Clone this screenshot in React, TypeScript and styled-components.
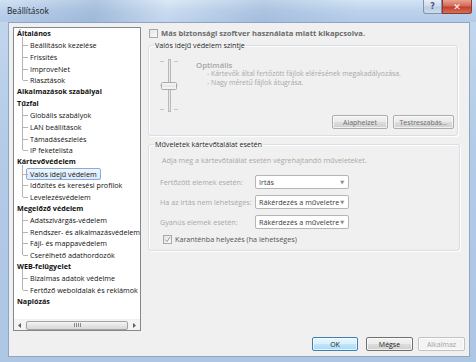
import React from 'react';
import styled, { createGlobalStyle } from 'styled-components';

const Global = createGlobalStyle`
  html, body { margin: 0; padding: 0; overflow: hidden; background: #b7cde6; }
  * { box-sizing: border-box; }
`;

const FONT = `"Open Sans", "Noto Sans", "DejaVu Sans", sans-serif`;

const Window = styled.div`
  width: 476px;
  height: 362px;
  display: flex;
  flex-direction: column;
  font-family: ${FONT};
  font-size: 7.2px;
  background: linear-gradient(180deg, #c4d8ee 0%, #b3cbe7 40%, #adc6e4 100%);
`;

const TitleBar = styled.div`
  height: 22px;
  display: flex;
  align-items: flex-start;
  padding-left: 7px;
  background:
    linear-gradient(100deg, rgba(255,255,255,0.0) 0%, rgba(120,150,190,0.35) 20%, rgba(255,255,255,0.2) 35%, rgba(120,150,190,0.25) 55%, rgba(255,255,255,0) 75%),
    linear-gradient(180deg, #d3e3f4 0%, #bcd2ec 50%, #b3cbe8 100%);
`;

const Title = styled.div`
  margin-top: 5px;
  font-size: 8.3px;
  color: #1a1a1a;
  flex: 1;
`;

const CaptionButtons = styled.div`
  display: flex;
  margin-right: 4px;
`;

const CapBtn = styled.div<{ $close?: boolean }>`
  height: 14px;
  width: ${p => (p.$close ? '30px' : '19px')};
  border: 1px solid ${p => (p.$close ? '#8a3a30' : '#7f93ad')};
  border-top: none;
  border-radius: ${p => (p.$close ? '0 0 3px 0' : '0 0 0 3px')};
  background: ${p =>
    p.$close
      ? 'linear-gradient(180deg, #e7a493 0%, #d66a56 45%, #c2412b 55%, #d5715a 100%)'
      : 'linear-gradient(180deg, #e6eef8 0%, #cfdced 45%, #bccde4 55%, #cddbec 100%)'};
  color: ${p => (p.$close ? '#fff' : '#4a5a70')};
  font-size: ${p => (p.$close ? '9px' : '8px')};
  font-weight: bold;
  display: flex;
  align-items: center;
  justify-content: center;
  font-family: "DejaVu Sans", sans-serif;
`;

const Client = styled.div`
  flex: 1;
  margin: 0 6px 5px 8px;
  border: 1px solid #8fa5c1;
  background: #f0f0f0;
  display: flex;
  flex-direction: column;
`;

const Main = styled.div`
  flex: 1;
  display: flex;
  padding: 4px 0 0 4px;
  min-height: 0;
`;

const TreeBox = styled.div`
  width: 128px;
  border: 1px solid #828790;
  background: #fff;
  display: flex;
  flex-direction: column;
`;

const TreeScroll = styled.div`
  flex: 1;
  overflow: hidden;
`;

const ROW = 11.65;

const Row = styled.div<{ $top?: boolean }>`
  height: ${ROW}px;
  line-height: ${ROW}px;
  white-space: nowrap;
  color: #111;
  font-weight: ${p => (p.$top ? 700 : 400)};
  padding-left: ${p => (p.$top ? '3px' : '0')};
`;

const Children = styled.div`
  position: relative;
  padding-left: 12px;
  &::before {
    content: '';
    position: absolute;
    left: 8px;
    top: -3px;
    bottom: ${ROW / 2}px;
    border-left: 1px solid #b4b4b4;
  }
`;

const ChildRow = styled.div`
  position: relative;
  height: ${ROW}px;
  display: flex;
  align-items: center;
  &::before {
    content: '';
    position: absolute;
    left: -3px;
    top: 50%;
    width: 5px;
    border-top: 1px solid #b4b4b4;
  }
`;

const ChildLabel = styled.span<{ $sel?: boolean }>`
  white-space: nowrap;
  color: #111;
  padding: 0 3px 0 3px;
  height: 12px;
  line-height: 10px;
  border: 1px solid ${p => (p.$sel ? '#84acdd' : 'transparent')};
  border-radius: 2px;
  background: ${p => (p.$sel ? 'linear-gradient(180deg, #eef5fd 0%, #dae9fb 100%)' : 'transparent')};
`;

const HScroll = styled.div`
  height: 11px;
  display: flex;
  align-items: center;
  background: #f3f3f3;
  border-top: 1px solid #f0f0f0;
  padding: 0 1px;
`;

const Arrow = styled.div`
  width: 10px;
  display: flex;
  align-items: center;
  justify-content: center;
`;

const Thumb = styled.div`
  flex: 1;
  height: 9px;
  margin: 0 1px;
  border: 1px solid #a3a3a3;
  border-radius: 2px;
  background: linear-gradient(180deg, #f5f5f5 0%, #e5e5e5 50%, #d8d8d8 100%);
  display: flex;
  align-items: center;
  justify-content: center;
`;

const Right = styled.div`
  margin-left: 7px;
  width: 311px;
  display: flex;
  flex-direction: column;
`;

const CheckRow = styled.label<{ $bold?: boolean; $color?: string }>`
  display: flex;
  align-items: center;
  gap: 3px;
  color: ${p => p.$color || '#444'};
  font-weight: ${p => (p.$bold ? 700 : 400)};
  font-size: ${p => (p.$bold ? '7.6px' : '7.2px')};
  white-space: nowrap;
`;

const Box = styled.span`
  width: 9px;
  height: 9px;
  border: 1px solid #a9a9a9;
  background: linear-gradient(135deg, #e4e4e4 0%, #fafafa 100%);
  display: inline-flex;
  align-items: center;
  justify-content: center;
  flex: none;
`;

const Group = styled.fieldset<{ $w: number; $h: number; $mt: number }>`
  margin: ${p => p.$mt}px 0 0 0;
  width: ${p => p.$w}px;
  height: ${p => p.$h}px;
  border: 1px solid #d5dfe5;
  border-radius: 3px;
  box-shadow: inset 1px 1px 0 #fff, 1px 1px 0 #fff;
  padding: 0;
  min-width: 0;
  display: flex;
  flex-direction: column;
`;

const Legend = styled.legend`
  padding: 0 1px;
  margin-left: 5px;
  color: #1e1e1e;
  font-size: 7.2px;
  line-height: 9px;
`;

const LevelArea = styled.div`
  display: flex;
  padding: 9px 0 0 8px;
`;

const LevelText = styled.div`
  margin-left: 15px;
  color: #a8a8a8;
  display: flex;
  flex-direction: column;
`;

const LevelTitle = styled.div`
  font-size: 7.8px;
  font-weight: 600;
  color: #a5a5a5;
  line-height: 10px;
  margin-top: 1px;
`;

const Bullet = styled.div`
  padding-left: 11px;
  line-height: 8.5px;
  font-size: 6.9px;
  white-space: nowrap;
`;

const ButtonRow = styled.div<{ $pad: string }>`
  display: flex;
  justify-content: flex-end;
  gap: 5px;
  padding: ${p => p.$pad};
  margin-top: auto;
`;

const Button = styled.button<{ $w: number; $variant?: 'default' | 'disabled' | 'dim' }>`
  width: ${p => p.$w}px;
  height: 14px;
  padding: 0;
  font-family: ${FONT};
  font-size: 7px;
  border-radius: 2px;
  border: 1px solid ${p =>
    p.$variant === 'default' ? '#3c7fb1' : p.$variant === 'disabled' ? '#bfc3c6' : p.$variant === 'dim' ? '#acacac' : '#707070'};
  color: ${p => (p.$variant === 'disabled' ? '#a3a3a3' : p.$variant === 'dim' ? '#6f6f6f' : '#1e1e1e')};
  background: ${p =>
    p.$variant === 'disabled'
      ? '#f4f4f4'
      : p.$variant === 'default'
      ? 'linear-gradient(180deg, #eaf6fd 0%, #d9f0fc 50%, #bee6fd 51%, #a7d9f5 100%)'
      : 'linear-gradient(180deg, #f2f2f2 0%, #ebebeb 50%, #dddddd 51%, #cfcfcf 100%)'};
  box-shadow: inset 0 0 0 1px rgba(255,255,255,0.7);
`;

const Desc = styled.div`
  color: #a8a8a8;
  padding: 7px 0 0 13px;
  white-space: nowrap;
  line-height: 9px;
`;

const Form = styled.div`
  display: grid;
  grid-template-columns: 95px 94px;
  grid-auto-rows: 14px;
  row-gap: 6px;
  padding: 10px 0 0 11px;
  align-items: center;
`;

const FieldLabel = styled.div`
  color: #a8a8a8;
  white-space: nowrap;
`;

const Select = styled.div`
  height: 14px;
  border: 1px solid #b5b5b5;
  border-radius: 2px;
  background: #fff;
  display: flex;
  align-items: center;
  justify-content: space-between;
  padding: 0 4px 0 3px;
  color: #3a3a3a;
  white-space: nowrap;
`;

const Caret = styled.span`
  font-size: 5px;
  color: #8a8a8a;
  font-family: "DejaVu Sans", sans-serif;
`;

const Quarantine = styled.div`
  padding: 5px 0 0 14px;
`;

const tree: { label: string; children: string[] }[] = [
  { label: 'Általános', children: ['Beállítások kezelése', 'Frissítés', 'ImproveNet', 'Riasztások'] },
  { label: 'Alkalmazások szabályai', children: [] },
  { label: 'Tűzfal', children: ['Globális szabályok', 'LAN beállítások', 'Támadásészlelés', 'IP feketelista'] },
  { label: 'Kártevővédelem', children: ['Valós idejű védelem', 'Időzítés és keresési profilok', 'Levelezésvédelem'] },
  {
    label: 'Megelőző védelem',
    children: ['Adatszivárgás-védelem', 'Rendszer- és alkalmazásvédelem', 'Fájl- és mappavédelem', 'Cserélhető adathordozók'],
  },
  { label: 'WEB-felügyelet', children: ['Bizalmas adatok védelme', 'Fertőző weboldalak és reklámok'] },
  { label: 'Naplózás', children: [] },
];

const Slider = () => (
  <svg width="24" height="56" viewBox="0 0 24 56">
    <g stroke="#c4c4c4" strokeWidth="1">
      <line x1="3" y1="2.5" x2="7" y2="2.5" />
      <line x1="3" y1="26.5" x2="7" y2="26.5" />
      <line x1="3" y1="50.5" x2="7" y2="50.5" />
      <line x1="17" y1="2.5" x2="21" y2="2.5" />
      <line x1="17" y1="26.5" x2="21" y2="26.5" />
      <line x1="17" y1="50.5" x2="21" y2="50.5" />
    </g>
    <rect x="11.5" y="0.5" width="2" height="52" fill="#e8e8e8" stroke="#b9b9b9" />
    <rect x="4.5" y="23.5" width="15" height="7" rx="1" fill="#f2f2f2" stroke="#a9a9a9" />
    <line x1="6" y1="27" x2="18" y2="27" stroke="#dcdcdc" />
  </svg>
);

export default function App() {
  return (
    <>
      <Global />
      <Window>
        <TitleBar>
          <Title>Beállítások</Title>
          <CaptionButtons>
            <CapBtn>?</CapBtn>
            <CapBtn $close>✕</CapBtn>
          </CaptionButtons>
        </TitleBar>
        <Client>
          <Main>
            <TreeBox>
              <TreeScroll>
                {tree.map(g => (
                  <div key={g.label}>
                    <Row $top>{g.label}</Row>
                    {g.children.length > 0 && (
                      <Children>
                        {g.children.map(c => (
                          <ChildRow key={c}>
                            <ChildLabel $sel={c === 'Valós idejű védelem'}>{c}</ChildLabel>
                          </ChildRow>
                        ))}
                      </Children>
                    )}
                  </div>
                ))}
              </TreeScroll>
              <HScroll>
                <Arrow>
                  <svg width="4" height="5" viewBox="0 0 4 5"><path d="M3 0 L0 2.5 L3 5 Z" fill="#606060" /></svg>
                </Arrow>
                <Thumb>
                  <svg width="7" height="4" viewBox="0 0 7 4"><path d="M0.5 0v4M2.5 0v4M4.5 0v4M6.5 0v4" stroke="#8a8a8a" /></svg>
                </Thumb>
                <Arrow>
                  <svg width="4" height="5" viewBox="0 0 4 5"><path d="M1 0 L4 2.5 L1 5 Z" fill="#606060" /></svg>
                </Arrow>
              </HScroll>
            </TreeBox>
            <Right>
              <CheckRow $bold $color="#6b6b6b" style={{ marginTop: 1, marginLeft: 1 }}>
                <Box />
                Más biztonsági szoftver használata miatt kikapcsolva.
              </CheckRow>
              <Group $w={310} $h={95} $mt={3}>
                <Legend>Valós idejű védelem szintje</Legend>
                <LevelArea>
                  <Slider />
                  <LevelText>
                    <LevelTitle>Optimális</LevelTitle>
                    <Bullet>- Kártevők által fertőzött fájlok elérésének megakadályozása.</Bullet>
                    <Bullet>- Nagy méretű fájlok átugrása.</Bullet>
                  </LevelText>
                </LevelArea>
                <ButtonRow $pad="0 3px 3px 0">
                  <Button $w={56} $variant="dim">Alaphelzet</Button>
                  <Button $w={61} $variant="dim">Testreszabás...</Button>
                </ButtonRow>
              </Group>
              <Group $w={312} $h={111} $mt={4}>
                <Legend>Műveletek kártevőtalálat esetén</Legend>
                <Desc>Adja meg a kártevőtalálat esetén végrehajtandó műveleteket.</Desc>
                <Form>
                  <FieldLabel>Fertőzött elemek esetén:</FieldLabel>
                  <Select>Irtás<Caret>▼</Caret></Select>
                  <FieldLabel>Ha az irtás nem lehetséges:</FieldLabel>
                  <Select>Rákérdezés a műveletre<Caret>▼</Caret></Select>
                  <FieldLabel>Gyanús elemek esetén:</FieldLabel>
                  <Select>Rákérdezés a műveletre<Caret>▼</Caret></Select>
                </Form>
                <Quarantine>
                  <CheckRow $color="#555">
                    <Box>
                      <svg width="7" height="7" viewBox="0 0 7 7"><path d="M1 3.5 L3 5.5 L6 1" stroke="#9a9a9a" fill="none" strokeWidth="1" /></svg>
                    </Box>
                    Karanténba helyezés (ha lehetséges)
                  </CheckRow>
                </Quarantine>
              </Group>
            </Right>
          </Main>
          <ButtonRow $pad="6px 4px 5px 0">
            <Button $w={46} $variant="default">OK</Button>
            <Button $w={47} style={{ marginLeft: 3 }}>Mégse</Button>
            <Button $w={47} $variant="disabled">Alkalmaz</Button>
          </ButtonRow>
        </Client>
      </Window>
    </>
  );
}
